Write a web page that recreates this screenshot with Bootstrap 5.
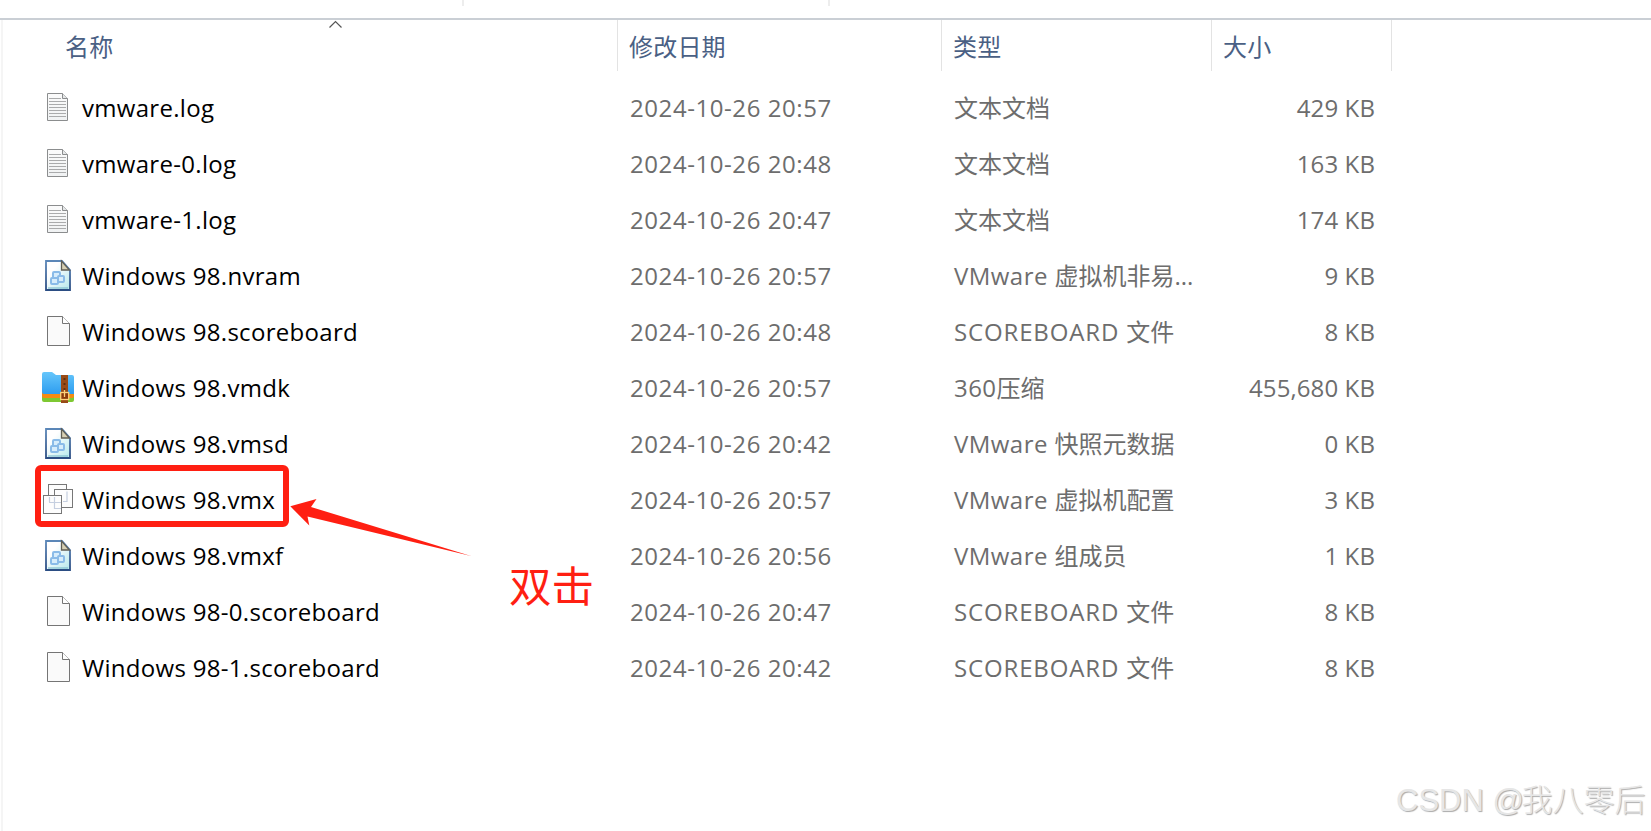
<!DOCTYPE html>
<html lang="zh-CN">
<head>
<meta charset="utf-8">
<title>Windows 98</title>
<link href="https://cdn.jsdelivr.net/npm/bootstrap@5.3.0/dist/css/bootstrap.min.css" rel="stylesheet">
<style>
body{width:1651px;height:831px;overflow:hidden;background:#fff;color:#000;font-family:"Open Sans","Noto Sans CJK SC",sans-serif;font-size:24px}
.topbar{height:20px;border-bottom:2px solid #cacfd5}
.tick{width:2px;height:6px;background:#ededed}
.tick-a{margin-left:462px}.tick-b{margin-left:364px}
.pane{height:811px;margin-left:1px;border-left:2px solid #f5f5f5}
.grid4{display:grid;grid-template-columns:615px 324px 270px 180px}
.head{height:51px;color:#4a6084}
.head>div{border-right:1px solid #e3e3e3;line-height:54px;padding-left:11px;height:51px;letter-spacing:.2px}
.head>div:first-child{padding-left:62px}
.files{padding-top:9px}
.entry{height:56px;line-height:56px;color:#6d6d6d;white-space:nowrap}
.fname{color:#000;padding-left:37px}
.fname svg{width:36px;height:36px;flex:none}
.fname span{padding-left:6px;letter-spacing:.3px}
.fdate{padding-left:12px;letter-spacing:.57px}
.ftype{padding-left:12px}
.ftype .lat{letter-spacing:.45px}
.ftype .caps{letter-spacing:.85px}
.fsize{padding-right:17px;letter-spacing:.1px}
.frame-red{left:35px;top:465px;width:254px;height:62px;border:6px solid #ff1f12;border-radius:6px}
.arrow{left:290px;top:495px}
.note{left:509px;top:554px;font-size:42.600px;line-height:62px;color:#ff1f12}
.wmark{left:1396px;top:777px;font-size:31px;line-height:48px;font-weight:300;color:#e6e6e6;text-shadow:1px 1px 1px #aaa;font-family:"Liberation Sans","Noto Sans CJK SC",sans-serif;white-space:nowrap}
.wmark .at{letter-spacing:-2.500px}
</style>
</head>
<body class="position-relative">
<svg width="0" height="0" class="position-absolute">
<defs>
<linearGradient id="gp" x1="0" y1="0" x2="0" y2="1"><stop offset="0" stop-color="#fbfbfb"/><stop offset="1" stop-color="#f0f2f3"/></linearGradient>
<linearGradient id="gv" x1="0" y1="0" x2="1" y2="1"><stop offset=".3" stop-color="#fff"/><stop offset="1" stop-color="#b5e8ec"/></linearGradient>
<linearGradient id="gb" x1="0" y1="0" x2="0" y2="1"><stop offset="0" stop-color="#66c6fb"/><stop offset="1" stop-color="#2d9df0"/></linearGradient>
<linearGradient id="ge" x1="0" y1="0" x2="0" y2="1"><stop offset="0" stop-color="#5b87b8"/><stop offset="1" stop-color="#2b4d83"/></linearGradient>
<symbol id="i-log" viewBox="0 0 36 36"><path d="M7.500 3.500H22.500L27.500 8.500V30.500H7.500Z" fill="url(#gp)" stroke="#8b8d8e"/><path d="M22.500 3.500V8.500H27.500" fill="#e5e7e8" stroke="#8b8d8e"/><path d="M9 8.500H21M9 11.500H26M9 14.500H26M9 17.500H26M9 20.500H26M9 23.500H26M9 26.500H26" stroke="#aaabac"/></symbol>
<symbol id="i-blank" viewBox="0 0 36 36"><path d="M7.500 2.500H22.500L29.500 9.500V31.500H7.500Z" fill="#fafafa" stroke="#757575"/><path d="M22.500 2.500V9.500H29.500" fill="#fff" stroke="#757575"/></symbol>
<symbol id="i-vm" viewBox="0 0 36 36"><path d="M6 3H22L30 12V32H6Z" fill="url(#gv)" stroke="url(#ge)" stroke-width="1.800"/><path d="M8 30H28" stroke="#73b5c6" stroke-width="1"/><path d="M21.500 3V12H29.500Z" fill="#d8d0b4" stroke="#615f55" stroke-width="1.300"/><g fill="#d7edfb" stroke="#8abbe8" stroke-width="2"><rect x="13" y="14" width="7" height="7" rx="1"/><rect x="18" y="18" width="6" height="6" rx="1"/><rect x="11" y="20" width="7" height="6" rx="1"/></g></symbol>
<symbol id="i-zip" viewBox="0 0 36 36"><path d="M2 25H34V30Q34 32 32 32H4Q2 32 2 30Z" fill="#7ec832"/><path d="M2 22H34V26Q34 28 32 28H4Q2 28 2 26Z" fill="#f58b12"/><path d="M2 4Q2 2 4 2H12L16 5H32Q34 5 34 7V24H4Q2 24 2 22Z" fill="url(#gb)"/><rect x="21" y="5" width="7" height="28" fill="#984b16"/><path d="M24.500 8V21" stroke="#60300e" stroke-width="2" stroke-dasharray="2 3"/><rect x="20.700" y="22.500" width="8" height="7" fill="#8c3a0c" stroke="#ffd17a" stroke-width="1.300"/><path d="M24.500 20V27" stroke="#ffd17a" stroke-width="1.300"/></symbol>
<symbol id="i-vmx" viewBox="0 0 36 36"><g fill="#fdfdfd" stroke="#777"><rect x="8.500" y="2.500" width="18" height="18"/><rect x="14.500" y="7.500" width="18" height="18"/><rect x="3.500" y="13.500" width="18" height="18"/></g><path d="M27 9.500V19.500H23M14.500 15V26.500H21M9 20.500H21M9.500 15V20" fill="none" stroke="#c5cfe0" stroke-width="1.200"/></symbol>
</defs>
</svg>
<div class="topbar d-flex"><div class="tick tick-a"></div><div class="tick tick-b"></div></div>
<main class="pane">
<div class="grid4 head"><div>名称</div><div>修改日期</div><div>类型</div><div>大小</div></div>
<div class="files">
<div class="grid4 entry"><div class="fname d-flex align-items-center"><svg><use href="#i-log"/></svg><span>vmware.log</span></div><div class="fdate">2024-10-26 20:57</div><div class="ftype">文本文档</div><div class="fsize text-end">429 KB</div></div>
<div class="grid4 entry"><div class="fname d-flex align-items-center"><svg><use href="#i-log"/></svg><span>vmware-0.log</span></div><div class="fdate">2024-10-26 20:48</div><div class="ftype">文本文档</div><div class="fsize text-end">163 KB</div></div>
<div class="grid4 entry"><div class="fname d-flex align-items-center"><svg><use href="#i-log"/></svg><span>vmware-1.log</span></div><div class="fdate">2024-10-26 20:47</div><div class="ftype">文本文档</div><div class="fsize text-end">174 KB</div></div>
<div class="grid4 entry"><div class="fname d-flex align-items-center"><svg><use href="#i-vm"/></svg><span>Windows 98.nvram</span></div><div class="fdate">2024-10-26 20:57</div><div class="ftype"><span class="lat">VMware </span>虚拟机非易...</div><div class="fsize text-end">9 KB</div></div>
<div class="grid4 entry"><div class="fname d-flex align-items-center"><svg><use href="#i-blank"/></svg><span>Windows 98.scoreboard</span></div><div class="fdate">2024-10-26 20:48</div><div class="ftype"><span class="caps">SCOREBOARD </span>文件</div><div class="fsize text-end">8 KB</div></div>
<div class="grid4 entry"><div class="fname d-flex align-items-center"><svg><use href="#i-zip"/></svg><span>Windows 98.vmdk</span></div><div class="fdate">2024-10-26 20:57</div><div class="ftype"><span class="lat">360</span>压缩</div><div class="fsize text-end">455,680 KB</div></div>
<div class="grid4 entry"><div class="fname d-flex align-items-center"><svg><use href="#i-vm"/></svg><span>Windows 98.vmsd</span></div><div class="fdate">2024-10-26 20:42</div><div class="ftype"><span class="lat">VMware </span>快照元数据</div><div class="fsize text-end">0 KB</div></div>
<div class="grid4 entry"><div class="fname d-flex align-items-center"><svg><use href="#i-vmx"/></svg><span>Windows 98.vmx</span></div><div class="fdate">2024-10-26 20:57</div><div class="ftype"><span class="lat">VMware </span>虚拟机配置</div><div class="fsize text-end">3 KB</div></div>
<div class="grid4 entry"><div class="fname d-flex align-items-center"><svg><use href="#i-vm"/></svg><span>Windows 98.vmxf</span></div><div class="fdate">2024-10-26 20:56</div><div class="ftype"><span class="lat">VMware </span>组成员</div><div class="fsize text-end">1 KB</div></div>
<div class="grid4 entry"><div class="fname d-flex align-items-center"><svg><use href="#i-blank"/></svg><span>Windows 98-0.scoreboard</span></div><div class="fdate">2024-10-26 20:47</div><div class="ftype"><span class="caps">SCOREBOARD </span>文件</div><div class="fsize text-end">8 KB</div></div>
<div class="grid4 entry"><div class="fname d-flex align-items-center"><svg><use href="#i-blank"/></svg><span>Windows 98-1.scoreboard</span></div><div class="fdate">2024-10-26 20:42</div><div class="ftype"><span class="caps">SCOREBOARD </span>文件</div><div class="fsize text-end">8 KB</div></div>
</div>
</main>
<svg class="position-absolute" style="left:329px;top:20px" width="14" height="9"><path d="M.5 7.500L6.500 1.500L12.500 7.500" fill="none" stroke="#555" stroke-width="1.200"/></svg>
<div class="frame-red position-absolute"></div>
<svg class="arrow position-absolute" width="182" height="64"><path d="M.3 11.300L26.500 4L21 12L181 61L17.500 21.500L19.300 30.500Z" fill="#ff1f12"/></svg>
<div class="note position-absolute">双击</div>
<div class="wmark position-absolute">CSDN <span class="at">@</span>我八零后</div>
<script src="https://cdn.jsdelivr.net/npm/bootstrap@5.3.0/dist/js/bootstrap.bundle.min.js"></script>
</body>
</html>
